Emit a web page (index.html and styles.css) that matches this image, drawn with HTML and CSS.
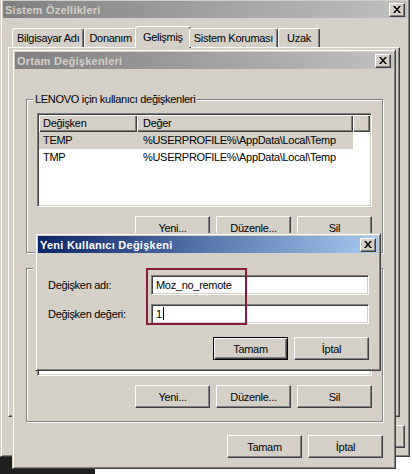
FILE: index.html
```html
<!DOCTYPE html>
<html lang="tr">
<head>
    <meta charset="UTF-8">
    <meta name="viewport" content="width=device-width, initial-scale=1.0">
    <title>Ortam Değişkenleri</title>

    <link rel="stylesheet" href="styles.css">
</head>
<body>

    <div class="desktop">
        <div class="desk-corner"></div>

        <!-- System properties (behind) -->
        <div class="window sysprops">
            <div class="titlebar">
                <span>Sistem Özellikleri</span>
                <span class="close"><svg width="8" height="7" viewBox="0 0 8 7"><path d="M0 0h2l2 2.4L6 0h2L5 3.5 8 7H6L4 4.6 2 7H0l3-3.5z"/></svg></span>
            </div>
            <div class="tabs">
                <div class="tab">Bilgisayar Adı</div>
                <div class="tab">Donanım</div>
                <div class="tab current">Gelişmiş</div>
                <div class="tab">Sistem Koruması</div>
                <div class="tab">Uzak</div>
            </div>
            <div class="tab-panel"></div>
            <div class="button-row outer-buttons">
                <button class="btn">Tamam</button>
                <button class="btn">İptal</button>
                <button class="btn">Uygula</button>
            </div>
        </div>

        <!-- Environment variables -->
        <div class="window envvars">
            <div class="titlebar">
                <span>Ortam Değişkenleri</span>
                <span class="close"><svg width="8" height="7" viewBox="0 0 8 7"><path d="M0 0h2l2 2.4L6 0h2L5 3.5 8 7H6L4 4.6 2 7H0l3-3.5z"/></svg></span>
            </div>

            <fieldset class="group">
                <legend>LENOVO için kullanıcı değişkenleri</legend>
                <div class="listview">
                    <div class="lv-head"><span>Değişken</span><span class="value">Değer</span><span></span></div>
                    <div class="lv-row selected"><span>TEMP</span><span class="value">%USERPROFILE%\AppData\Local\Temp</span></div>
                    <div class="lv-row"><span>TMP</span><span class="value">%USERPROFILE%\AppData\Local\Temp</span></div>
                </div>
                <div class="button-row group-buttons">
                    <button class="btn">Yeni...</button>
                    <button class="btn">Düzenle...</button>
                    <button class="btn">Sil</button>
                </div>
            </fieldset>

            <!-- system variables: mostly hidden behind the dialog -->
            <fieldset class="group second">
                <legend>Sistem değişkenleri</legend>
                <div class="listview"></div>
                <div class="button-row group-buttons">
                    <button class="btn">Yeni...</button>
                    <button class="btn">Düzenle...</button>
                    <button class="btn">Sil</button>
                </div>
            </fieldset>

            <div class="button-row footer-buttons">
                <button class="btn">Tamam</button>
                <button class="btn">İptal</button>
            </div>
        </div>

        <!-- New user variable -->
        <div class="window newvar">
            <div class="titlebar active">
                <span>Yeni Kullanıcı Değişkeni</span>
                <span class="close"><svg width="8" height="7" viewBox="0 0 8 7"><path d="M0 0h2l2 2.4L6 0h2L5 3.5 8 7H6L4 4.6 2 7H0l3-3.5z"/></svg></span>
            </div>
            <div class="newvar-form">
                <label>Değişken adı:</label>
                <div class="field">Moz_no_remote</div>
                <label>Değişken değeri:</label>
                <div class="field">1<span class="caret"></span></div>
            </div>
            <div class="button-row dialog-buttons">
                <button class="btn default">Tamam</button>
                <button class="btn">İptal</button>
            </div>
        </div>

        <!-- red marker drawn over the screenshot -->
        <div class="marker"></div>
    </div>

</body>
</html>
```

FILE: styles.css
```css
* {
    box-sizing: border-box;
}

body {
    margin: 0;
    background: #fff;
    font-family: "Liberation Sans", Arial, sans-serif;
    font-size: 11px;
    letter-spacing: -0.3px;
    color: #000;
}

.desktop {
    position: relative;
    width: 412px;
    height: 474px;
    overflow: hidden;
    background: #fff;
}

.desk-corner {
    position: absolute;
    left: 0;
    top: 457px;
    width: 95px;
    height: 17px;
    background: #1e1e1c;
}

/* Classic window frame */
.window {
    position: absolute;
    display: flex;
    flex-direction: column;
    background: #d4d0c8;
    border: 1px solid;
    border-color: #d4d0c8 #404040 #404040 #d4d0c8;
    box-shadow: inset 1px 1px #fff, inset -1px -1px #808080;
    padding: 2px;
}

.sysprops {
    left: 0;
    top: -2px;
    width: 410px;
    height: 459px;
}

.envvars {
    left: 12px;
    top: 49px;
    width: 384px;
    padding-bottom: 10px;
}

.newvar {
    left: 35px;
    top: 233px;
    width: 346px;
    padding-bottom: 10px;
}

/* Title bars */
.titlebar {
    display: flex;
    align-items: center;
    justify-content: space-between;
    height: 17px;
    padding: 0 2px;
    background: linear-gradient(to right, #808080, #c0c0c0);
    color: #d4d0c8;
    font-weight: bold;
    letter-spacing: 0.25px;
}

.titlebar.active {
    background: linear-gradient(to right, #0a246a, #a6caf0);
    color: #fff;
}

.close {
    display: flex;
    align-items: center;
    justify-content: center;
    width: 16px;
    height: 14px;
    background: #d4d0c8;
    border: 1px solid;
    border-color: #fff #404040 #404040 #fff;
    box-shadow: inset -1px -1px #808080;
}

/* Tabs */
.tabs {
    position: relative;
    z-index: 1;
    display: flex;
    align-items: flex-end;
    height: 21px;
    margin-top: 8px;
    padding-left: 9px;
}

.tab {
    min-width: 42px;
    height: 19px;
    padding: 3px 4px 0;
    text-align: center;
    background: #d4d0c8;
    border: 1px solid;
    border-bottom: 0;
    border-color: #fff #404040 transparent #fff;
    border-radius: 3px 3px 0 0;
    box-shadow: inset -1px 0 #808080;
    white-space: nowrap;
}

.tab.current {
    height: 22px;
    margin: 0 -2px -1px;
    padding: 4px 7px 0;
}

.tab-panel {
    height: 370px;
    margin: 0 7px 0 5px;
    border: 1px solid;
    border-color: #fff #404040 #404040 #fff;
    box-shadow: inset -1px -1px #808080;
}

/* Buttons */
.button-row {
    display: flex;
    justify-content: flex-end;
    gap: 6px;
}

.btn {
    width: 75px;
    height: 23px;
    padding: 0;
    font: inherit;
    letter-spacing: inherit;
    color: #000;
    background: #d4d0c8;
    border: 1px solid;
    border-color: #fff #404040 #404040 #fff;
    box-shadow: inset -1px -1px #808080;
}

.btn.default {
    border-color: #000;
    box-shadow: inset 1px 1px #fff, inset -1px -1px #404040, inset -2px -2px #808080;
}

.outer-buttons {
    margin: 8px 2px 0 0;
}

.group-buttons {
    margin-top: 9px;
}

.footer-buttons {
    margin: 13px 10px 0 0;
}

.dialog-buttons {
    margin: 13px 9px 0 0;
}

/* Group boxes */
.group {
    min-width: 0;
    margin: 24px 10px 0 11px;
    padding: 0 10px 13px;
    border: 1px solid #808080;
    box-shadow: inset 1px 1px #fff, 1px 1px #fff;
}

.group.second {
    margin-top: 9px;
}

.group legend {
    margin-left: -4px;
    padding: 0 2px;
    line-height: 13px;
    background: #d4d0c8;
}

/* List view */
.listview {
    height: 94px;
    margin-top: 7px;
    padding: 1px;
    background: #fff;
    border: 1px solid;
    border-color: #808080 #fff #fff #808080;
    box-shadow: inset 1px 1px #404040, inset -1px -1px #d4d0c8;
    overflow: hidden;
}

.lv-head {
    display: grid;
    grid-template-columns: 98px 216px 1fr;
    height: 17px;
    line-height: 16px;
}

.lv-head span {
    padding-left: 4px;
    background: #d4d0c8;
    box-shadow: inset 1px 1px #fff, inset -1px -1px #404040, inset -2px -2px #808080;
}

.lv-row {
    display: grid;
    grid-template-columns: 98px 216px;
    width: 314px;
    height: 17px;
    line-height: 17px;
}

.lv-row span {
    padding-left: 4px;
    white-space: nowrap;
    overflow: hidden;
}

.lv-head .value,
.lv-row .value {
    padding-left: 6px;
}

.lv-row.selected {
    background: #d4d0c8;
}

/* New variable form */
.newvar-form {
    display: grid;
    grid-template-columns: 1fr 218px;
    align-items: center;
    row-gap: 9px;
    padding: 22px 9px 0 10px;
}

.field {
    height: 20px;
    padding: 0 4px;
    line-height: 18px;
    background: #fff;
    border: 1px solid;
    border-color: #808080 #fff #fff #808080;
    box-shadow: inset 1px 1px #404040, inset -1px -1px #d4d0c8;
    white-space: nowrap;
}

.caret {
    display: inline-block;
    width: 1px;
    height: 13px;
    margin-left: 1px;
    vertical-align: -2px;
    background: #000;
}

.marker {
    position: absolute;
    left: 146px;
    top: 268px;
    width: 101px;
    height: 57px;
    border: 2px solid #8b1a3c;
}
```
